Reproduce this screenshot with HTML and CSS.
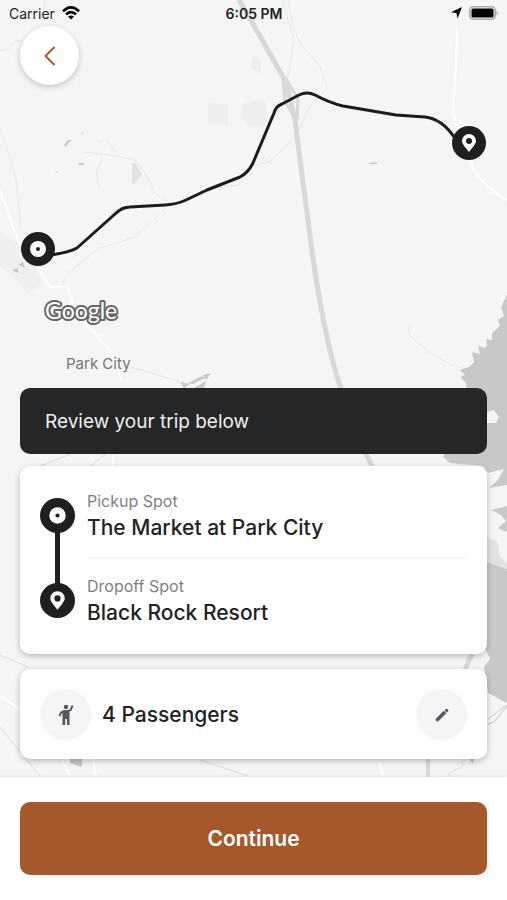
FILE: index.html
```
<!DOCTYPE html>
<html lang="en">
<head>
    <meta charset="UTF-8">
    <meta name="viewport" content="width=device-width, initial-scale=1.0">
    <title>Review your trip</title>
    <link rel="stylesheet" href="styles.css">
</head>
<body>
    <div class="screen">
        <svg class="map" viewBox="0 0 507 900" preserveAspectRatio="xMidYMin slice" role="img" aria-label="Route map">
            <!-- terrain -->
            <g fill="#eeeeee">
                <path d="M208 102l10 2h10v21h-20zM243 104l10-3h13v24l-16 2-9-12zM253 55l8 5v14l-10-6z"/>
                <path d="M0 232l18 12 16 18 8 22-14 10-12-14-16-14z" fill="#f0f0f0"/>
                <path d="M132 163h4l6 12-8 9h-2z" fill="#e2e2e2"/>
            </g>
            <!-- lake -->
            <g fill="#c8c8c8">
                <path d="M507 295L501 307 504 316 498 320 500 326 492 333 492 340 486 339 487 345 485 348 478 346 480 354 472 352 474 362 469 367 460 370 465 375 460 377 466 383 467 390 460 420 443 457 450 463 483 466 488 473 504 469 498 480 489 488 507 485z"/>
                <path d="M507 506L491 510 501 515 506 521 498 528 507 532z"/>
                <path d="M480 560L488 562 507 569 507 703 488 693 484 667 490 659 486 650 480 640z"/>
            </g>
            <path d="M487 412l7-2 5 7-3 6h-9z" fill="#f5f5f5"/>
            <path d="M487 537l11 5 1 12 8 10v5l-20-8z" fill="#e2e2e2"/>
            <!-- buildings -->
            <g fill="#c8c8c8">
                <path d="M64 145l4-5h5l-4 2-3 5zM81 134l2-2v3zM78 163h6v2h-5zM55 174l2-3 1 1zM70 167l2-1zM369 163l9-1-2 2h-7zM70 757h12v10l-12-4zM469 759h5l-1 5z"/>
                <path d="M12 270l6-2v5zM18 265l5-3 2 6zM203 375l8-2-5 7zM180 382l10 2-6 4zM188 383l14-7 3 2-12 6zM194 388l12-7-2 7z"/>
            </g>
            <!-- minor roads -->
            <g fill="none" stroke="#e6e6e6" stroke-width="1">
                <path d="M45 0q-2 10 2 17M0 50q8 2 12-6 4-4 10-4M85 152l25 3 25 5 10 13 10 20 15 10-20 20-15 14-37 12-24 19q-10 10-12 18M98 142l8-2 10 12M102 158l-6 15 3 14M200 190l38-5 14-12"/>
                <path d="M282 0q6 20 12 38l-4 28-6 26M288 0q4 30 14 46l18 20 7 22-18 20-14 30-26 24-16 4M0 128l16 50 5 50M257 147l15 18M409 325q-4 10 14 22 20 16 38 21M130 367l15 4 35 11"/>
            </g>
            <g fill="none" stroke="#dcdcdc" stroke-width="1">
                <path d="M0 655l28 12M0 727l40 49M40 466l30-12M90 466l16-12M200 760l48 16M448 777l2-5 12-5 1-8"/>
                <path d="M488 724l6-2 13-16M488 719l19-14" stroke="#c8c8c8"/>
                <path d="M472 654l-7 15" stroke-width="5" stroke="#d8d8d8"/>
            </g>
            <g fill="none" stroke="#fff" stroke-width="2">
                <path d="M457 28l-1 40-3 40q0 14 12 34l7 24q8 18 35 34M0 190l18 50 32 47h18l6 22 36 42 12 30M0 696l20 13M62 760l8 15M93 758l3 18M113 454v14M378 760l6 16"/>
            </g>
            <!-- highway -->
            <g fill="none" stroke="#d8d8d8">
                <path d="M239 0l13 22 34 60 9 38q6 48 13 100 12 100 30 160l28 74 10 20" stroke-width="5"/>
                <path d="M283 80l2 22 9 14M286 79l12 20-1 22" stroke-width="3"/>
                <path d="M428 759v18" stroke-width="4"/>
            </g>
            <!-- route -->
            <path class="route" d="M38 249L54 254.500Q70 252 77 248L115 214Q122 207 130 207L165 205Q178 204 186 200L207 190 240 177Q248 173 253 163L274 113Q276 106 282 104L299 95Q307 91 315 95 330 103 343 106L396 115 425 117Q442 119 454 137L469 143"/>
            <g class="pin" transform="translate(38 249)">
                <circle r="17"/>
                <circle r="8" fill="#fff"/>
                <circle r="2"/>
            </g>
            <g class="pin" transform="translate(469 143)">
                <circle r="17"/>
                <path d="M0 9C-3 5-7 1-7-2a7 7 0 0 1 14 0C7 1 3 5 0 9z" fill="#fff"/>
                <circle cy="-2" r="3"/>
            </g>
            <text class="wordmark" x="45" y="319">Google</text>
            <text class="place" x="66" y="369">Park City</text>
        </svg>

        <div class="status">
            <div class="carrier">
                <span>Carrier</span>
                <svg width="18" height="14" viewBox="0 0 18 14">
                    <g fill="none" stroke="#000" stroke-width="2.6">
                        <path d="M1 5.200q8-7.600 16 0M4 8.400q5-4.600 10 0"/>
                    </g>
                    <path d="M6 10.600q3-2.400 6 0L9 13.600z"/>
                </svg>
            </div>
            <div class="time">6:05 PM</div>
            <div class="power">
                <svg width="11" height="12" viewBox="0 0 11 12">
                    <path d="M11 0L6.600 11.500 5.400 6 0 5.200z"/>
                </svg>
                <svg width="30" height="14" viewBox="0 0 30 14">
                    <rect x="0.800" y="0.800" width="25.400" height="12.400" rx="3.600" fill="#f5f5f5" stroke="#aaa" stroke-width="1.600"/>
                    <rect x="2.500" y="2.500" width="22" height="9" rx="1.500"/>
                    <path d="M27.500 4.500q2.500 2.500 0 5z" fill="#aaa"/>
                </svg>
            </div>
        </div>

        <button class="back" type="button" aria-label="Back">
            <svg width="12" height="20" viewBox="0 0 12 20">
                <path d="M10 1.500L1.500 10l8.500 8.500" fill="none" stroke="#a5592a" stroke-width="2" stroke-linecap="round" stroke-linejoin="round"/>
            </svg>
        </button>

        <main class="sheet">
            <h1 class="banner">Review your trip below</h1>

            <ol class="card stops">
                <li class="stop">
                    <svg class="stop-icon" viewBox="-17 -17 34 34">
                        <circle r="17"/>
                        <circle r="8" fill="#fff"/>
                        <circle r="2"/>
                    </svg>
                    <div class="stop-text">
                        <p class="label">Pickup Spot</p>
                        <p class="value">The Market at Park City</p>
                    </div>
                </li>
                <li class="stop">
                    <svg class="stop-icon" viewBox="-17 -17 34 34">
                        <circle r="17"/>
                        <path d="M0 9C-3 5-7 1-7-2a7 7 0 0 1 14 0C7 1 3 5 0 9z" fill="#fff"/>
                        <circle cy="-2" r="3"/>
                    </svg>
                    <div class="stop-text">
                        <p class="label">Dropoff Spot</p>
                        <p class="value">Black Rock Resort</p>
                    </div>
                </li>
            </ol>

            <section class="card passengers">
                <span class="round">
                    <svg width="16" height="22" viewBox="0 0 16 22">
                        <circle cx="8" cy="3" r="2.200"/>
                        <path d="M14.500 1.500L12.800 5.800 9.500 7.300H6.500L3 8.500 1.500 12" fill="none" stroke="#56565f" stroke-width="2"/>
                        <path d="M4.500 6.500h7V21H9v-6H7.200v6H4.500z"/>
                    </svg>
                </span>
                <p class="value">4 Passengers</p>
                <button class="round" type="button" aria-label="Edit passengers">
                    <svg width="14" height="14" viewBox="0 0 14 14">
                        <path d="M2.500 11.500L9 5" fill="none" stroke="#56565f" stroke-width="3.600" stroke-linecap="round"/>
                        <path d="M9.600 2.200l1.200-1.200q.7-.5 1.300 0l1 1q.6.700 0 1.300l-1.200 1.200z"/>
                    </svg>
                </button>
            </section>
        </main>

        <footer class="footer">
            <button class="continue" type="button">Continue</button>
        </footer>
    </div>
</body>
</html>
```
FILE: styles.css
```
* {
    box-sizing: border-box;
}
body {
    margin: 0;
    font-family: Inter, "Liberation Sans", sans-serif;
    color: #222;
    background-color: #f5f5f5;
}
h1, p, ol {
    margin: 0;
    padding: 0;
}
button {
    border: none;
    padding: 0;
    font-family: inherit;
    cursor: pointer;
}
.screen {
    position: relative;
    display: flex;
    flex-direction: column;
    min-height: 100vh;
    overflow: hidden;
}

/* map behind everything */
.map {
    position: absolute;
    top: 0;
    left: 0;
    width: 100%;
    height: 100%;
}
.route {
    fill: none;
    stroke: #1c1c1c;
    stroke-width: 3;
    stroke-linejoin: round;
}
.pin {
    fill: #211f1e;
}
.wordmark {
    font-family: Lato, sans-serif;
    font-size: 23px;
    fill: #fff;
    stroke: #666;
    stroke-width: 4px;
    stroke-linejoin: round;
    paint-order: stroke;
}
.place {
    font-size: 15px;
    fill: #757575;
}

.status {
    position: relative;
    display: grid;
    grid-template-columns: 1fr auto 1fr;
    align-items: center;
    height: 26px;
    padding: 0 8px 0 9px;
    font-size: 14px;
}
.carrier, .power {
    display: flex;
    align-items: center;
    gap: 7px;
}
.power {
    justify-content: flex-end;
}
.time {
    font-weight: 600;
}

.back {
    position: relative;
    display: flex;
    align-items: center;
    justify-content: center;
    width: 59px;
    height: 59px;
    margin-left: 20px;
    border-radius: 50%;
    background-color: #fff;
    box-shadow: 0 2px 6px rgba(0, 0, 0, 0.2);
}

.sheet {
    position: relative;
    margin-top: auto;
    padding: 0 20px 18px;
}
.banner {
    margin-bottom: 12px;
    padding: 20px 25px 18px;
    border-radius: 10px;
    background-color: #242627;
    color: #f0f0f0;
    font-size: 19px;
    font-weight: 400;
    line-height: 28px;
}
.card {
    border-radius: 10px;
    background-color: #fff;
    box-shadow: 0 2px 6px rgba(0, 0, 0, 0.25);
}
.stops {
    margin-bottom: 15px;
    padding: 25px 20px 26px;
    list-style: none;
}
.stop {
    position: relative;
    display: flex;
    gap: 12px;
}
.stop-icon {
    position: relative;
    width: 35px;
    height: 35px;
    margin-top: 7px;
    fill: #211f1e;
}
.stop-text {
    flex: 1;
}
.stop:first-child .stop-text {
    margin-bottom: 17px;
    padding-bottom: 14px;
    border-bottom: 2px solid #f5f5f6;
}
/* line joining the two stops */
.stop:first-child::before {
    content: "";
    position: absolute;
    top: 25px;
    bottom: -10px;
    left: 15px;
    width: 5px;
    background-color: #211f1e;
}
.label {
    margin-bottom: 2px;
    color: #808086;
    font-size: 16px;
    line-height: 20px;
}
.value {
    font-size: 21px;
    font-weight: 500;
    line-height: 30px;
}
.passengers {
    display: flex;
    align-items: center;
    gap: 11px;
    padding: 20px 20px 19px;
}
.passengers .value {
    flex: 1;
}
.round {
    display: flex;
    align-items: center;
    justify-content: center;
    width: 51px;
    height: 51px;
    border-radius: 50%;
    background-color: #f5f5f7;
    fill: #56565f;
}

.footer {
    position: relative;
    padding: 25px 20px;
    background-color: #fff;
    box-shadow: 0 -1px 3px rgba(0, 0, 0, 0.08);
}
.continue {
    display: block;
    width: 100%;
    height: 73px;
    border-radius: 10px;
    background-color: #a5592a;
    color: #fff;
    font-size: 21px;
    font-weight: 600;
}
```
